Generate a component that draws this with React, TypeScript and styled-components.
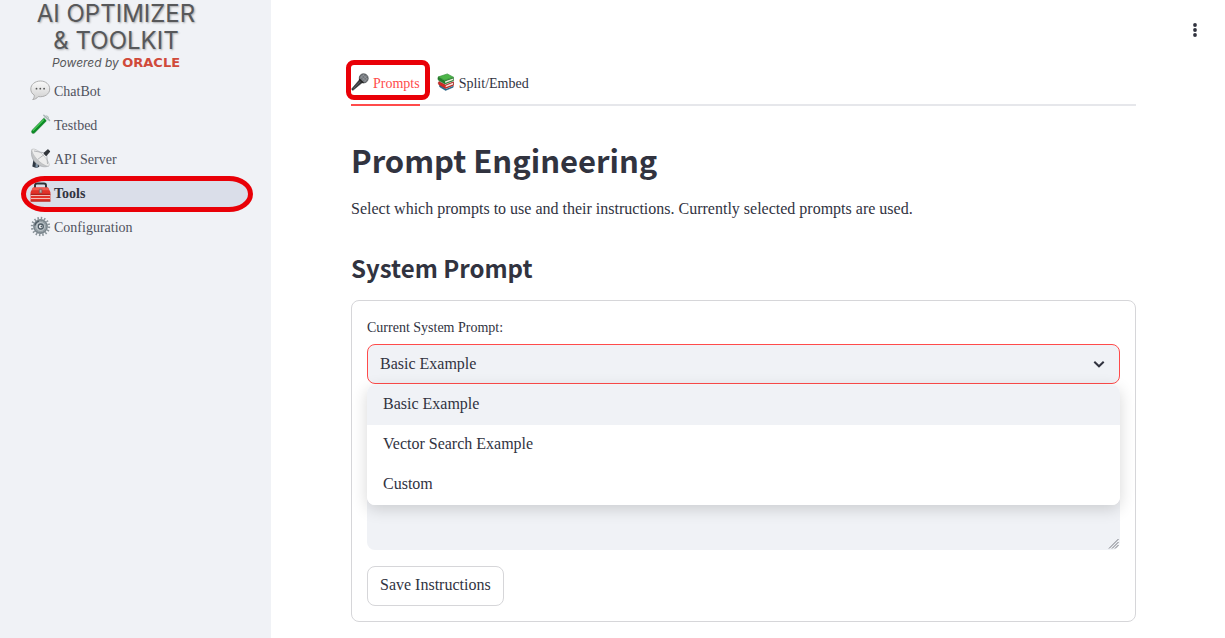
import React, { useState } from "react";
import styled, { createGlobalStyle, css } from "styled-components";

const serif = `"Liberation Serif", "Times New Roman", serif`;
const ink = "#31333f";
const accent = "#ff4b4b";
const panel = "#f0f2f6";
const line = "#d6d6d9";

const GlobalStyle = createGlobalStyle`
  *, *::before, *::after { box-sizing: border-box; }
  body { margin: 0; background: #fff; color: ${ink}; font-family: ${serif}; font-size: 16px; }
  button, select, textarea { font: inherit; color: inherit; }
  svg { display: block; flex: none; }
`;

const Layout = styled.div`
  display: flex;
  min-height: 100vh;
`;

const Sidebar = styled.aside`
  flex: none;
  width: 271px;
  padding: 0 20px 0 22px;
  background: ${panel};
`;

const Brand = styled.header`
  width: 188px;
  height: 76px;
  text-align: center;
  font-family: Inter, "Liberation Sans", sans-serif;
  color: #57585a;
`;

const BrandName = styled.div`
  font-size: 24px;
  line-height: 27px;
  white-space: nowrap;
  text-shadow: 1px 1px 2px rgba(0, 0, 0, 0.3);
`;

const BrandBy = styled.div`
  font-size: 12px;
  line-height: 18px;
  font-style: italic;
  white-space: nowrap;
`;

const Vendor = styled.span`
  color: #d04a3a;
  font-family: "DejaVu Sans", sans-serif;
  font-size: 13px;
  font-style: normal;
  font-weight: 700;
`;

const Nav = styled.nav`
  display: flex;
  flex-direction: column;
  gap: 4px;
`;

const ring = css`
  &::after {
    content: "";
    position: absolute;
    border: 5px solid #e90007;
    pointer-events: none;
  }
`;

const NavLink = styled.a<{ $active?: boolean }>`
  position: relative;
  display: flex;
  align-items: center;
  gap: 3px;
  height: 30px;
  padding: 2px 8px 0;
  border-radius: 15px;
  font-size: 14px;
  text-decoration: none;
  color: #50525e;
  svg {
    margin-bottom: 4px;
  }
  ${({ $active }) =>
    $active &&
    css`
      background: #dadee9;
      color: ${ink};
      font-weight: 700;
      ${ring}
      &::after {
        inset: -2px -2px -4px -1px;
        border-radius: 24px / 18px;
      }
    `}
`;

const Main = styled.main`
  position: relative;
  flex: 1;
  min-width: 0;
  padding: 62px 89px 16px 80px;
`;

const MenuButton = styled.button`
  position: absolute;
  top: 18px;
  right: 18px;
  display: grid;
  place-items: center;
  width: 24px;
  height: 24px;
  padding: 0;
  border: 0;
  background: none;
`;

const Tabs = styled.div`
  display: flex;
  gap: 17px;
  border-bottom: 2px solid #e6e7eb;
`;

const Tab = styled.button<{ $active?: boolean }>`
  position: relative;
  display: flex;
  align-items: center;
  gap: 4px;
  height: 44px;
  margin-bottom: -2px;
  padding: 0;
  border: 0;
  background: none;
  font-size: 14px;
  svg {
    margin-bottom: 4px;
  }
  ${({ $active }) =>
    $active &&
    css`
      color: ${accent};
      box-shadow: inset 0 -2px ${accent};
      ${ring}
      &::after {
        inset: -2px -10px 6px -5px;
        border-radius: 8px;
      }
    `}
`;

const Title = styled.h1`
  margin: 32px 0 0;
  font: 700 31px/44px "Noto Sans CJK SC", sans-serif;
`;

const Lead = styled.p`
  margin: 14px 0 0;
  line-height: 26px;
`;

const Subtitle = styled.h2`
  margin: 30px 0 0;
  font: 700 24px/32px "Noto Sans CJK SC", sans-serif;
`;

const Card = styled.form`
  margin-top: 16px;
  padding: 15px;
  border: 1px solid ${line};
  border-radius: 8px;
`;

const Label = styled.label`
  display: block;
  margin-bottom: 4px;
  font-size: 14px;
  line-height: 24px;
`;

const Field = styled.div`
  position: relative;
`;

const Select = styled.select`
  display: block;
  width: 100%;
  height: 40px;
  padding: 0 12px 2px;
  border: 1px solid ${accent};
  border-radius: 8px;
  outline: 0;
  appearance: none;
  background: ${panel};
`;

const Chevron = styled.svg`
  position: absolute;
  top: 12px;
  right: 13px;
  pointer-events: none;
`;

const Menu = styled.ul`
  position: absolute;
  z-index: 1;
  top: 41px;
  left: 0;
  right: 0;
  margin: 0;
  padding: 0;
  overflow: hidden;
  list-style: none;
  background: #fff;
  border-radius: 8px;
  box-shadow: 0 4px 16px rgba(0, 0, 0, 0.16);
`;

const Option = styled.li<{ $selected: boolean }>`
  padding: 0 16px;
  line-height: 38px;
  height: 40px;
  cursor: pointer;
  background: ${({ $selected }) => ($selected ? panel : "#fff")};
`;

const InstructionsField = styled.div`
  position: relative;
  margin: 40px 0 16px;
`;

const Instructions = styled.textarea`
  display: block;
  width: 100%;
  height: 126px;
  padding: 12px;
  border: 0;
  border-radius: 8px;
  outline: 0;
  resize: vertical;
  background: ${panel};
  &::-webkit-resizer {
    background: transparent;
  }
`;

const Grip = styled.svg`
  position: absolute;
  right: 1px;
  bottom: 1px;
  pointer-events: none;
`;

const SaveButton = styled.button`
  display: block;
  height: 40px;
  padding: 0 12px 2px;
  border: 1px solid ${line};
  border-radius: 8px;
  background: #fff;
`;

const ChatIcon = () => (
  <svg width="21" height="21" viewBox="0 0 21 21" aria-hidden="true">
    <defs>
      <linearGradient id="chat" x1="0" y1="0" x2="0" y2="1">
        <stop offset="0" stopColor="#fafafa" />
        <stop offset="1" stopColor="#cfcfcf" />
      </linearGradient>
    </defs>
    <path d="M10.500 1C5 1 .8 4.500.8 9c0 2.800 1.300 4.800 3.500 6.200.1 1.800-.5 3.200-1.600 4.300 2.400-.1 4.200-1.200 5.500-2.900 6.500.9 11.500-2.600 11.500-7.600C19.700 4.500 15.800 1 10.500 1z" fill="url(#chat)" stroke="#a6a6a6" strokeWidth=".9" />
    <circle cx="6.500" cy="8.700" r=".9" fill="#555" />
    <circle cx="10.300" cy="8.700" r=".9" fill="#555" />
    <circle cx="14.100" cy="8.700" r=".9" fill="#555" />
  </svg>
);

const TubeIcon = () => (
  <svg width="21" height="21" viewBox="0 0 21 21" aria-hidden="true">
    <path d="M16.500 4 3.400 17.500" stroke="#9fb0a8" strokeWidth="4.600" strokeLinecap="round" />
    <path d="M16.500 4 3.400 17.500" stroke="#e6eeec" strokeWidth="3.500" strokeLinecap="round" />
    <path d="M14.800 5.800 3.400 17.500" stroke="#0d8a26" strokeWidth="3.900" strokeLinecap="round" />
    <path d="M13.600 5.900 3.200 16.400" stroke="#4fd05c" strokeWidth="1.100" strokeLinecap="round" />
    <path d="m14 4 3.200 3.200 1.600-1.700-3.200-3.200z" fill="#dfe8e6" />
    <path d="m13.800 1.200 5.700 5.200" stroke="#aab6b8" strokeWidth="1.500" strokeLinecap="round" />
  </svg>
);

const DishIcon = () => (
  <svg width="21" height="21" viewBox="0 0 21 21" aria-hidden="true">
    <path d="M3.500 11.500 2.300 18.500c2 1.500 5 1.500 7 .2L8.500 13z" fill="#2f3842" />
    <path d="m6 12-.5 7.200 2.200.2L8.300 14z" fill="#7f93a6" />
    <path d="M2.200 1.200C.4 5 1.700 11.500 6 15.300c4.200 3.700 9.700 4.400 13 2.500z" fill="#c3c5c7" stroke="#909396" strokeWidth=".5" />
    <path d="M2.200 1.200C4.800.2 10 3.500 13.600 7.600c4 4.400 6.600 8.900 5.400 10.200-1.400 1.300-7-1.400-11.400-6C3.400 7.500.9 2.500 2.200 1.200z" fill="#ececec" stroke="#b3b5b7" strokeWidth=".6" />
    <path d="m8 11.200 8-6M17.500 16 16.600 5M4 3 15 5" stroke="#8d9195" strokeWidth=".6" />
    <path d="m14.300 5.200 3.600-3.300 1.500 1.600-3.300 3.700z" fill="#30343a" stroke="#30343a" strokeWidth="1.400" strokeLinejoin="round" />
  </svg>
);

const ToolboxIcon = () => (
  <svg width="21" height="21" viewBox="0 0 21 21" aria-hidden="true">
    <path d="M5 6.500V3.400C5 2.300 5.800 1.500 7 1.500h7c1.200 0 2 .8 2 1.900v3.100" fill="none" stroke="#2f3034" strokeWidth="1.900" />
    <path d="M3 5.500h15L20.400 10v9.500H.6V10z" fill="#e2332a" />
    <path d="M3 5.500h15l1.400 2.700H1.600z" fill="#ef5a50" />
    <path d="M.6 12.300h19.800" stroke="#8f1a16" strokeWidth=".8" />
    <path d="M1 13.500h19M1 16.500h19" stroke="#f3cdc8" strokeWidth=".9" />
    <path d="M.6 19.100h19.800" stroke="#a91b16" strokeWidth=".8" />
    <rect x="9.300" y="7.300" width="2.600" height="3.600" rx=".5" fill="#b8a9a5" stroke="#6b4a47" strokeWidth=".6" />
  </svg>
);

const GearIcon = () => (
  <svg width="21" height="21" viewBox="0 0 21 21" aria-hidden="true">
    <circle cx="10.500" cy="10.500" r="8.500" fill="none" stroke="#8b959b" strokeWidth="2.400" strokeDasharray="1.500 1.838" />
    <circle cx="10.500" cy="10.500" r="6.600" fill="#a5afb5" stroke="#7b868d" strokeWidth="1.600" />
    <circle cx="10.500" cy="10.500" r="5" fill="#bcc4c9" stroke="#929ca2" strokeWidth="1" />
    <path d="M5 9.500a5.600 5.600 0 0 1 4-4.300" fill="none" stroke="#4e5a63" strokeWidth="1.200" />
    <circle cx="10.800" cy="10.500" r="2.500" fill="#f3f4f6" stroke="#4d5a64" strokeWidth="1.300" />
    <circle cx="11.400" cy="10.500" r=".9" fill="#4b5861" />
  </svg>
);

const MicIcon = () => (
  <svg width="18" height="18" viewBox="0 0 18 18" aria-hidden="true">
    <path d="M8.600 6.600.8 15.700c-.4.800.7 1.900 1.500 1.400L11.400 9.500z" fill="#35373b" stroke="#222" strokeWidth=".5" />
    <path d="m9.300 8.400-6.800 7" stroke="#6d7075" strokeWidth=".8" />
    <path d="M8.300 6.200C7.800 3 9.800.8 12.500.8c2.700 0 4.700 2 4.700 4.500 0 2.700-2 4.900-5.100 4.600z" fill="#72767b" stroke="#3b3d41" strokeWidth=".7" />
    <path d="m9.700 3.200 5.700 5.500M11.700 1.600l4.800 4.700M9 5.600 13.300 1M10.700 7.800l5.500-5.600M12.500 9.200l4-4" stroke="#a8abae" strokeWidth=".5" />
    <path d="m8.200 5.900 4.200 4.200" stroke="#222" strokeWidth="1.400" />
  </svg>
);

const BooksIcon = () => (
  <svg width="18" height="18" viewBox="0 0 18 18" aria-hidden="true">
    <path d="m2.600 12.200 6 3.800 7.600-3.400v1.600l-7.600 3.200-6-3.600z" fill="#256d9a" stroke="#174f6e" strokeWidth=".5" />
    <path d="m8.800 15.200 7.300-3.100v.9l-7.300 3.100z" fill="#efece2" />
    <path d="M2 8.500 8.500 12l8-3.200v3.400l-8 3.200L2 11.800c-.9-.9-.9-2.500 0-3.300z" fill="#d32a24" stroke="#8f1816" strokeWidth=".6" />
    <path d="m8.700 12.700 7.300-2.900v1.600l-7.300 2.900z" fill="#f1e9df" />
    <path d="M1.500 3.800 7.500 7.500l9-3v3.200l-8.500 3.300-6.500-3.700c-.8-.9-.8-2.600 0-3.500z" fill="#257f2b" stroke="#1d6523" strokeWidth=".5" />
    <path d="m8.200 8.200 7.900-2.800v1.700l-7.900 2.900z" fill="#eef0e2" />
    <path d="M1.500 3.800 10.300.9l6.200 3.300-8.700 3.200z" fill="#4cb548" stroke="#2c8a30" strokeWidth=".6" />
  </svg>
);

const navItems = [
  { name: "ChatBot", Icon: ChatIcon },
  { name: "Testbed", Icon: TubeIcon },
  { name: "API Server", Icon: DishIcon },
  { name: "Tools", Icon: ToolboxIcon },
  { name: "Configuration", Icon: GearIcon },
];

const prompts = ["Basic Example", "Vector Search Example", "Custom"];

export default function App() {
  const [prompt, setPrompt] = useState(prompts[0]);

  return (
    <Layout>
      <GlobalStyle />
      <Sidebar>
        <Brand>
          <BrandName>AI OPTIMIZER</BrandName>
          <BrandName>&amp; TOOLKIT</BrandName>
          <BrandBy>
            Powered by <Vendor>ORACLE</Vendor>
          </BrandBy>
        </Brand>
        <Nav>
          {navItems.map(({ name, Icon }) => (
            <NavLink key={name} href="#" $active={name === "Tools"}>
              <Icon />
              {name}
            </NavLink>
          ))}
        </Nav>
      </Sidebar>
      <Main>
        <MenuButton type="button" aria-label="Main menu">
          <svg width="4" height="14" viewBox="0 0 4 14" fill={ink}>
            <circle cx="2" cy="2" r="1.900" />
            <circle cx="2" cy="7" r="1.900" />
            <circle cx="2" cy="12" r="1.900" />
          </svg>
        </MenuButton>
        <Tabs role="tablist">
          <Tab type="button" role="tab" aria-selected="true" $active>
            <MicIcon />
            Prompts
          </Tab>
          <Tab type="button" role="tab" aria-selected="false">
            <BooksIcon />
            Split/Embed
          </Tab>
        </Tabs>
        <Title>Prompt Engineering</Title>
        <Lead>Select which prompts to use and their instructions. Currently selected prompts are used.</Lead>
        <Subtitle>System Prompt</Subtitle>
        <Card onSubmit={(e) => e.preventDefault()}>
          <Label htmlFor="system-prompt">Current System Prompt:</Label>
          <Field>
            <Select id="system-prompt" value={prompt} onChange={(e) => setPrompt(e.target.value)}>
              {prompts.map((p) => (
                <option key={p}>{p}</option>
              ))}
            </Select>
            <Chevron width="16" height="16" viewBox="0 0 16 16" fill="none" stroke={ink} strokeWidth="2" aria-hidden="true">
              <path d="m3.300 5.700 4.700 4.600 4.700-4.600" />
            </Chevron>
            <Menu role="listbox" aria-label="Current System Prompt">
              {prompts.map((p) => (
                <Option key={p} role="option" aria-selected={p === prompt} $selected={p === prompt} onClick={() => setPrompt(p)}>
                  {p}
                </Option>
              ))}
            </Menu>
          </Field>
          <InstructionsField>
            <Instructions aria-label="Prompt instructions" />
            <Grip width="11" height="11" viewBox="0 0 11 11" fill="none" stroke="#777980" aria-hidden="true">
              <path d="M1 10.500 10.500 1M4 10.500 10.500 4M7 10.500 10.500 7" />
            </Grip>
          </InstructionsField>
          <SaveButton type="submit">Save Instructions</SaveButton>
        </Card>
      </Main>
    </Layout>
  );
}
